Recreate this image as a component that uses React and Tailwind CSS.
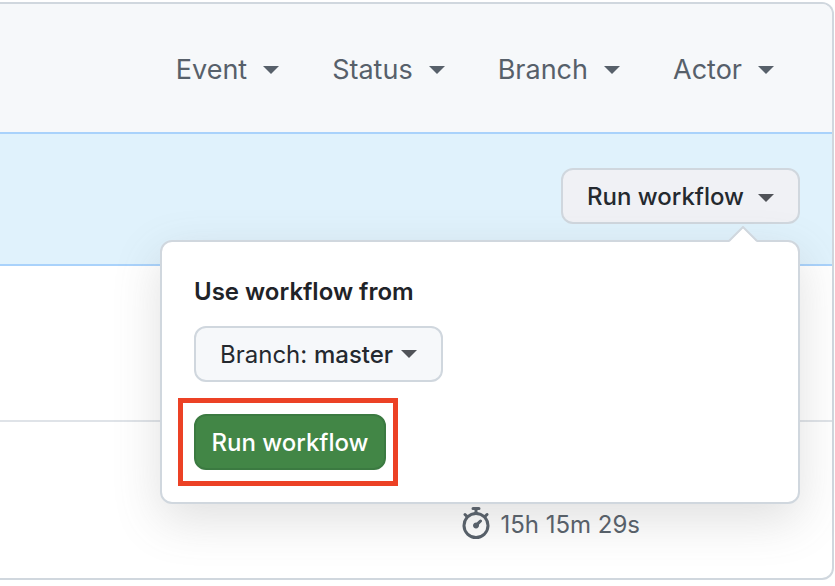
const filters = ["Event", "Status", "Branch", "Actor"];

function Caret() {
  return (
    <svg aria-hidden="true" viewBox="0 0 16 8" className="h-2 w-4 shrink-0 fill-current">
      <path d="M0 0h16L8 8z" />
    </svg>
  );
}

function Stopwatch() {
  return (
    <svg aria-hidden="true" viewBox="0 0 16 16" className="size-8 shrink-0 fill-current">
      <path d="M5.75.75A.75.75 0 0 1 6.5 0h3a.75.75 0 0 1 0 1.5h-.75v1l-.001.041a6.724 6.724 0 0 1 3.464 1.435l.007-.006.75-.75a.749.749 0 0 1 1.275.326.749.749 0 0 1-.215.734l-.75.75-.006.007a6.75 6.75 0 1 1-10.548 0L2.72 5.03l-.75-.75a.751.751 0 0 1 .018-1.042.751.751 0 0 1 1.042-.018l.75.75.007.006A6.72 6.72 0 0 1 7.25 2.541V1.5H6.5a.75.75 0 0 1-.75-.75ZM8 14.5a5.25 5.25 0 1 0-.001-10.501A5.25 5.25 0 0 0 8 14.5Zm.389-6.7 1.33-1.33a.75.75 0 1 1 1.061 1.06L9.45 8.861A1.503 1.503 0 0 1 8 10.75a1.499 1.499 0 1 1 .389-2.95Z" />
    </svg>
  );
}

function Popover() {
  return (
    <div className="absolute top-[72px] right-0 z-10 w-[640px] rounded-xl border-2 border-[#d0d7de] bg-white p-8 shadow-[0_16px_48px_rgba(100,100,100,0.2)]">
      <svg aria-hidden="true" viewBox="0 0 30 16" className="absolute -top-4 right-10 h-4 w-[30px]">
        <path d="M1 16 15 2l14 14z" fill="#fff" />
        <path d="M1 15 15 1l14 14" fill="none" stroke="#d0d7de" strokeWidth="2" />
      </svg>
      <p className="mb-4 text-2xl leading-9 font-semibold text-[#1f2328]">Use workflow from</p>
      <button type="button" className="flex h-14 items-center gap-2 rounded-xl border-2 border-[#d0d7de] bg-[#f6f8fa] px-6 text-2xl text-[#24292f]">
        <span className="pt-0.5">
          Branch: <span className="font-medium">master</span>
        </span>
        <span className="text-[#505358]">
          <Caret />
        </span>
      </button>
      <div className="relative mt-8 w-fit">
        <button type="button" className="flex h-14 w-48 items-center justify-center rounded-xl border-2 border-[#3b7a41] bg-[#428646] pt-0.5 text-2xl font-medium text-white">
          Run workflow
        </button>
        <div className="pointer-events-none absolute -inset-x-4 -inset-y-4 -right-3 border-[5px] border-[#ec4125]" />
      </div>
    </div>
  );
}

export default function App() {
  return (
    <main className="bg-white py-0.5 pr-px font-['Inter','Liberation_Sans',sans-serif]">
      <section className="rounded-r-xl border-2 border-l-0 border-[#d0d7de]">
        <header className="flex h-32 items-center justify-end gap-[53px] rounded-tr-[10px] bg-[#f6f8fa] pt-1 pr-[58px] text-[27px] text-[#57606a]">
          {filters.map((name) => (
            <button key={name} type="button" className="flex items-center gap-4">
              {name}
              <Caret />
            </button>
          ))}
        </header>
        <div className="flex justify-end border-y-2 border-[#a9d2fb] bg-[#e0f2fc] pt-[34px] pr-8 pb-10">
          <div className="relative">
            <button type="button" className="flex h-14 items-center gap-3.5 rounded-xl border-2 border-[#d0d7de] bg-[#f0f1f5] px-6 pt-0.5 text-2xl font-medium text-[#24292f]">
              Run workflow
              <span className="pt-0.5 text-[#505358]">
                <Caret />
              </span>
            </button>
            <Popover />
          </div>
        </div>
        <div className="h-[154px]" />
        <div className="flex justify-end border-t-2 border-[#dfe3e8] pt-[85px] pr-48 pb-[39px] text-2xl text-[#57606a]">
          <div className="flex h-8 items-center gap-2">
            <Stopwatch />
            <span className="pt-1">15h 15m 29s</span>
          </div>
        </div>
      </section>
    </main>
  );
}
